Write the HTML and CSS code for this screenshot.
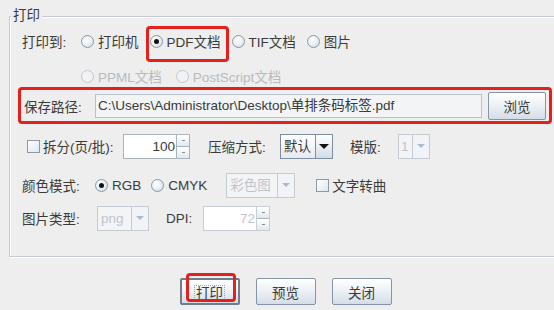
FILE: index.html
```html
<!DOCTYPE html>
<html lang="zh-CN">
<head>
  <meta charset="UTF-8">
  <title>打印</title>
  <link rel="stylesheet" href="styles.css">
</head>
<body>
  <div class="dialog">
    <div class="group">
      <div class="group-title">打印</div>

      <div class="row row-target">
        <span class="label lbl-target">打印到:</span>
        <label class="opt"><span class="radio"></span>打印机</label>
        <label class="opt mark mark-pdf"><span class="radio on"></span>PDF文档</label>
        <label class="opt"><span class="radio"></span>TIF文档</label>
        <label class="opt"><span class="radio"></span>图片</label>
      </div>

      <div class="row row-more">
        <label class="opt off"><span class="radio"></span>PPML文档</label>
        <label class="opt off"><span class="radio"></span>PostScript文档</label>
      </div>

      <div class="row row-path">
        <span class="label lbl-path">保存路径:</span>
        <div class="field path-field">C:\Users\Administrator\Desktop\单排条码标签.pdf</div>
        <button class="btn btn-browse">浏览</button>
      </div>

      <div class="row row-split">
        <label class="check-opt lbl-split"><span class="check"></span>拆分(页/批):</label>
        <div class="spinner spin-split">
          <div class="spin-value">100</div>
          <div class="spin-arrows"><span class="spin-up"></span><span class="spin-down"></span></div>
        </div>
        <span class="label lbl-zip">压缩方式:</span>
        <div class="combo combo-zip">
          <div class="combo-value">默认</div>
          <div class="combo-arrow"><span class="caret"></span></div>
        </div>
        <span class="label lbl-tpl">模版:</span>
        <div class="combo combo-tpl disabled">
          <div class="combo-value">1</div>
          <div class="combo-arrow"><span class="caret"></span></div>
        </div>
      </div>

      <div class="row row-color">
        <span class="label lbl-color">颜色模式:</span>
        <label class="opt"><span class="radio on"></span>RGB</label>
        <label class="opt"><span class="radio"></span>CMYK</label>
        <div class="combo combo-mode disabled">
          <div class="combo-value">彩色图</div>
          <div class="combo-arrow"><span class="caret"></span></div>
        </div>
        <label class="check-opt lbl-curve"><span class="check"></span>文字转曲</label>
      </div>

      <div class="row row-image">
        <span class="label lbl-image">图片类型:</span>
        <div class="combo combo-type disabled">
          <div class="combo-value">png</div>
          <div class="combo-arrow"><span class="caret"></span></div>
        </div>
        <span class="label lbl-dpi">DPI:</span>
        <div class="spinner spin-dpi disabled">
          <div class="spin-value">72</div>
          <div class="spin-arrows"><span class="spin-up"></span><span class="spin-down"></span></div>
        </div>
      </div>
    </div>

    <div class="actions">
      <button class="btn btn-action focused mark mark-print"><span class="focus-ring">打印</span></button>
      <button class="btn btn-action">预览</button>
      <button class="btn btn-action">关闭</button>
    </div>
  </div>
</body>
</html>
```

FILE: styles.css
```css
body { /* dialog background */
  margin: 0;
  background: #eeeeee;
  font-family: "Liberation Sans", "Noto Sans CJK SC", sans-serif;
  font-size: 13.5px;
  color: #3a3a3a;
  overflow: hidden;
}

.dialog {
  width: 554px;
  height: 310px;
  padding: 16px 0 0 9px;
  box-sizing: border-box;
}

/* titled group box, runs off the right edge */
.group {
  width: 600px;
  height: 241px;
  padding-left: 12px;
  border: 1px solid #c3cad3;
  box-shadow: inset 1px 1px 0 #ffffff, 1px 1px 0 #ffffff;
  box-sizing: border-box;
}

.group-title {
  width: fit-content;
  margin: -10px 0 0 -11px;
  padding: 0 2px;
  line-height: 18px;
  background: #eeeeee;
}

.row {
  display: flex;
  align-items: center;
  white-space: nowrap;
}

.label { flex: none; }

/* red marks drawn over the controls */
.mark { position: relative; }

.mark::after {
  content: "";
  position: absolute;
  border: 3px solid #e3211c;
  border-radius: 4px;
  pointer-events: none;
}

.mark-pdf::after { top: -5px; bottom: -11px; left: -4px; right: -8px; }

.mark-print::after { top: -7px; bottom: 1px; left: 4px; right: 2px; }

/* radios and checkboxes */
.opt, .check-opt {
  display: flex;
  align-items: center;
  flex: none;
}

.opt { margin-right: 11px; }

.radio {
  width: 11px;
  height: 11px;
  margin-right: 4px;
  border: 1px solid #8c98a6;
  border-radius: 50%;
  background: radial-gradient(circle at 40% 35%, #ffffff 0%, #eef2f6 45%, #c9d3de 100%);
  position: relative;
  flex: none;
}

.radio.on::after {
  content: "";
  position: absolute;
  left: 3px;
  top: 3px;
  width: 5px;
  height: 5px;
  border-radius: 50%;
  background: #111111;
}

.opt.off { color: #b7bbc0; }

.opt.off .radio {
  border-color: #c2c8cf;
  background: #f1f2f4;
}

.check {
  width: 11px;
  height: 11px;
  margin-right: 3px;
  border: 1px solid #8c98a6;
  background: linear-gradient(135deg, #ffffff 0%, #dfe6ee 100%);
  flex: none;
}

/* row 1: 打印到 */
.row-target { height: 32px; }
.lbl-target { width: 59px; }

/* row 2: disabled targets */
.row-more {
  height: 22px;
  padding: 8px 0 0 59px;
}
.row-more .opt { margin-right: 14px; }

/* row 3: save path */
.row-path {
  width: 525px;
  height: 31px;
  margin-left: -4px;
  padding-left: 3px;
  border: 3px solid #e3211c;
  border-radius: 4px;
}

.lbl-path { width: 71px; }

.field {
  background: #ffffff;
  border: 1px solid #b9c2cc;
  box-sizing: border-box;
}

.path-field {
  width: 387px;
  height: 24px;
  padding: 0 0 0 2px;
  line-height: 22px;
  background: #f2f4f6;
}

.btn {
  font-family: inherit;
  font-size: 13.5px;
  color: #3a3a3a;
  border: 1px solid #8595a7;
  border-radius: 2px;
  background: linear-gradient(#ffffff 0%, #eef2f6 45%, #d4dde7 100%);
  padding: 0;
}

.btn-browse {
  width: 58px;
  height: 28px;
  margin-left: 6px;
}

/* row 4: split / compression / template */
.row-split { height: 44px; }

.lbl-split {
  width: 96px;
  margin-left: 5px;
}

.spinner {
  display: flex;
  height: 25px;
  flex: none;
}

.spin-value {
  background: #ffffff;
  border: 1px solid #a9b3be;
  border-right: none;
  text-align: right;
  line-height: 23px;
  padding-right: 1px;
  box-sizing: border-box;
}

.spin-arrows {
  width: 14px;
  display: flex;
  flex-direction: column;
  border: 1px solid #a9b3be;
  box-sizing: border-box;
}

.spin-arrows span {
  flex: 1;
  background: linear-gradient(#ffffff, #e3e8ee);
  position: relative;
}

.spin-up { border-bottom: 1px solid #a9b3be; }

.spin-arrows span::after {
  content: "";
  position: absolute;
  left: 5px;
  top: 5px;
  width: 3px;
  height: 1px;
  background: #8a8f96;
}

.spin-split .spin-value { width: 53px; }

.lbl-zip {
  width: 72px;
  margin-left: 18px;
}

.combo {
  display: flex;
  height: 25px;
  border: 1px solid #7e8ea0;
  box-sizing: border-box;
  flex: none;
}

.combo-value {
  padding: 0 3px;
  line-height: 23px;
  background: linear-gradient(#ffffff, #e6ebf1);
}

.combo-arrow {
  width: 16px;
  border-left: 1px solid #7e8ea0;
  background: linear-gradient(#ffffff, #d3dce6);
  display: flex;
  align-items: center;
  justify-content: center;
}

.caret {
  width: 0;
  height: 0;
  border-left: 5px solid transparent;
  border-right: 5px solid transparent;
  border-top: 5px solid #111111;
}

.combo-zip { width: 53px; }
.combo-zip .combo-value { flex: 1; }

.lbl-tpl {
  width: 48px;
  margin-left: 17px;
}

.combo.disabled {
  border-color: #c4cbd3;
  color: #c0c5cb;
}

.combo.disabled .combo-value { background: #f3f4f6; }

.combo.disabled .combo-arrow {
  border-left-color: #c4cbd3;
  background: #f1f3f6;
}

.combo.disabled .caret { border-top-color: #a9bcd2; border-width: 4px 4px 0; }

.combo-tpl { width: 32px; }
.combo-tpl .combo-value { flex: 1; padding: 0 2px; }

/* row 5: colour mode */
.row-color { height: 34px; }

.lbl-color { width: 73px; }

.row-color .opt { margin-right: 10px; }

.combo-mode {
  width: 69px;
  margin-left: 9px;
}

.combo-mode .combo-value { flex: 1; }

.lbl-curve { margin-left: 21px; }

/* row 6: image type / DPI */
.row-image { height: 32px; }

.lbl-image { width: 75px; }

.combo-type { width: 52px; }
.combo-type .combo-value { flex: 1; }

.lbl-dpi {
  width: 37px;
  margin-left: 17px;
}

.spin-dpi .spin-value {
  width: 53px;
  color: #c0c5cb;
  border-color: #c8ced5;
}

.spin-dpi .spin-arrows { border-color: #c8ced5; }

/* bottom buttons */
.actions {
  display: flex;
  justify-content: center;
  gap: 16px;
  padding-left: 8px;
  margin-top: 21px;
}

.btn-action {
  width: 60px;
  height: 27px;
}

.btn-action.focused {
  border: 2px solid #6f7c8a;
}

.focus-ring {
  padding: 0 1px;
  outline: 1px dotted #9aa7b5;
}
```
